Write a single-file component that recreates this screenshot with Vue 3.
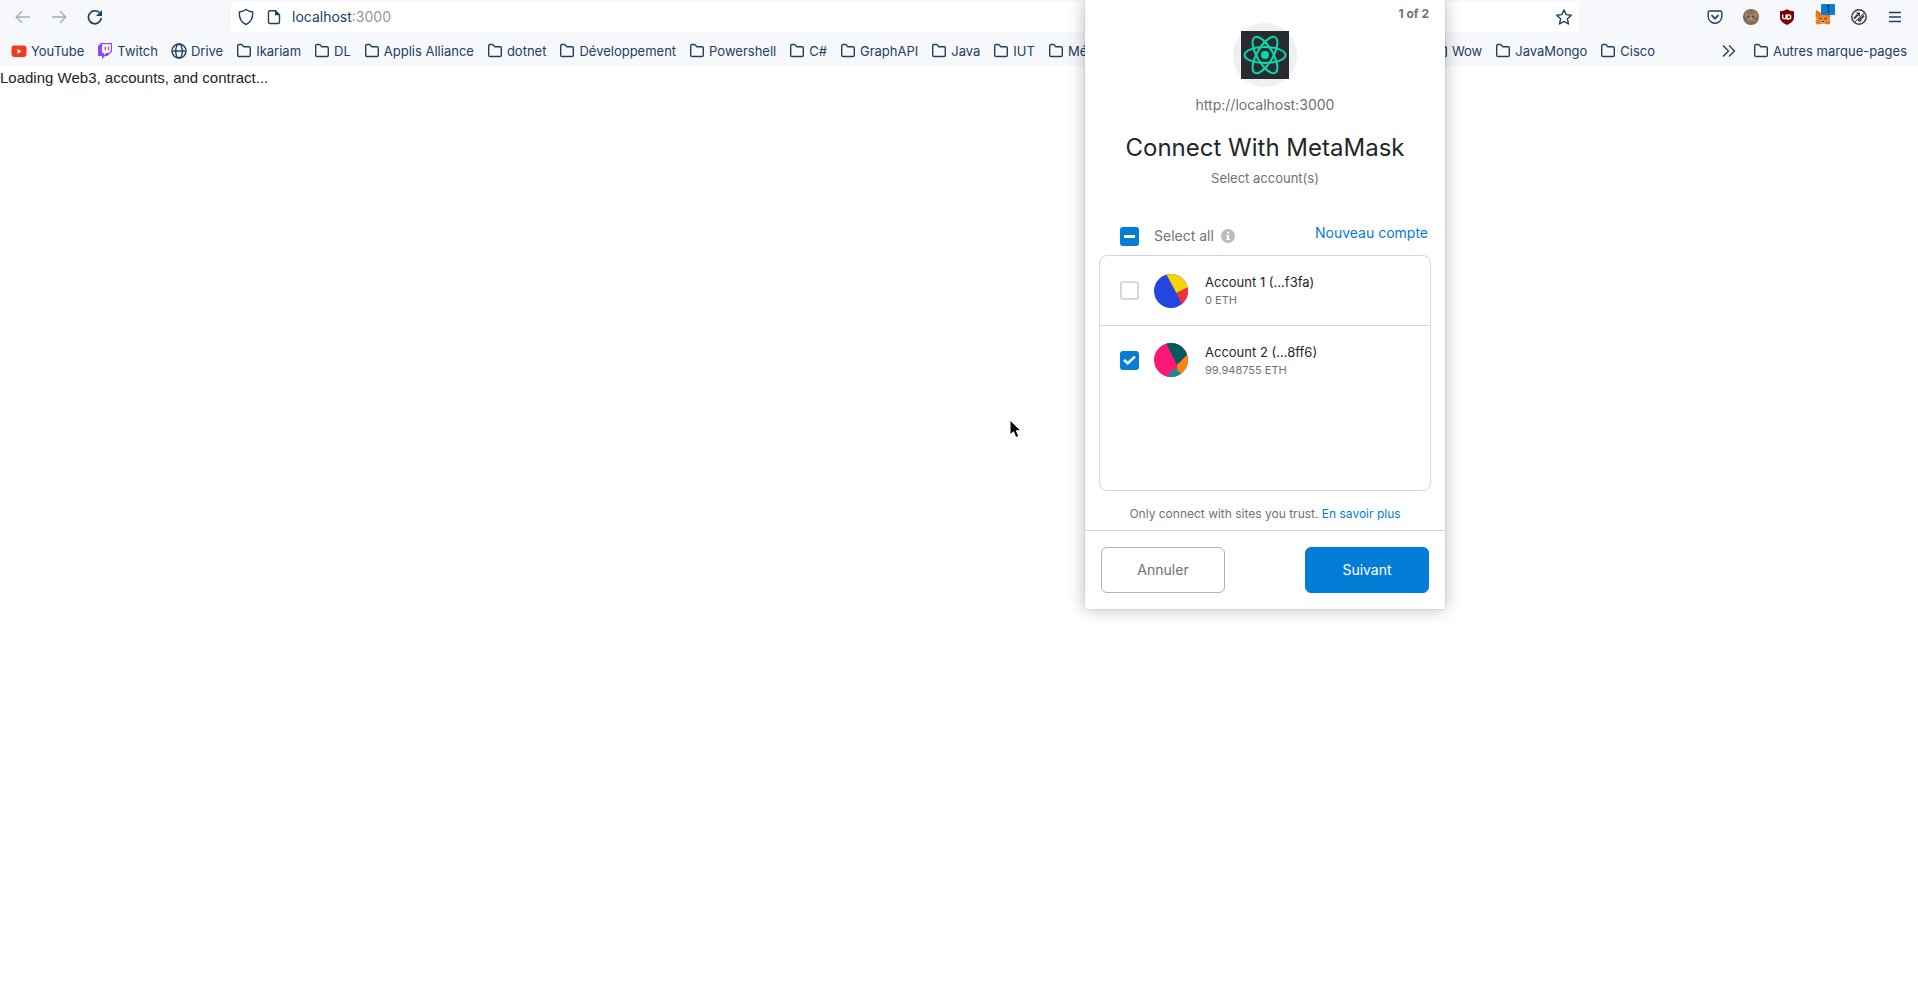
<script setup>
import { ref } from 'vue'

const folders = ['Ikariam', 'DL', 'Applis Alliance', 'dotnet', 'Développement', 'Powershell', 'C#', 'GraphAPI', 'Java', 'IUT']
const lateFolders = ['Wow', 'JavaMongo', 'Cisco']
const host = ref('localhost')
const accounts = ref([
  { id: 'acc1', name: 'Account 1 (...f3fa)', balance: '0 ETH', checked: false },
  { id: 'acc2', name: 'Account 2 (...8ff6)', balance: '99.948755 ETH', checked: true },
])
const folderPath = 'M1.7 3v9.2q0 1.3 1.3 1.3h10q1.3 0 1.3-1.3V5q0-1.3-1.3-1.3H7.8L6.2 1.9q-.4-.4-1-.4H3Q1.7 1.500 1.700 3z'
</script>

<template>
  <div class="browser">
    <header class="chrome">
      <div class="toolbar">
        <button class="tool dim" aria-label="Back">
          <svg width="16" height="16" viewBox="0 0 16 16"><path d="M15 8H1.500M7 2.200 1.200 8 7 13.800" /></svg>
        </button>
        <button class="tool dim" aria-label="Forward">
          <svg width="16" height="16" viewBox="0 0 16 16"><path d="M1 8h13.500M9 2.200 14.800 8 9 13.800" /></svg>
        </button>
        <button class="tool" aria-label="Reload">
          <svg width="16" height="16" viewBox="0 0 16 16"><path d="M14.400 9.200A6.500 6.500 0 1 1 12.400 3.500" stroke-width="1.700" /><path d="M15 1v6H9z" class="solid" /></svg>
        </button>
        <div class="urlbar">
          <svg width="16" height="18" viewBox="0 0 16 18"><path d="M8 1.500c2 1.600 4.200 2.300 6.700 2.500C14.900 10 13 14.500 8 16.500 3 14.500 1.100 10 1.300 4 3.800 3.800 6 3.100 8 1.500z" /></svg>
          <svg class="doc" width="14" height="16" viewBox="0 0 14 16"><path d="M3 1.800h5.500l4 4V13q0 1.500-1.500 1.500H3Q1.500 14.500 1.500 13V3.300Q1.500 1.800 3 1.800z" /><path d="M8 1.500v4.800h5z" class="solid" /></svg>
          <label class="address"><input v-model="host" aria-label="Address"><span>:3000</span></label>
          <button class="star" aria-label="Bookmark this page">
            <svg width="18" height="18" viewBox="0 0 18 18"><path d="m9 1.800 2.100 4.800 5.200.6-3.900 3.600 1.100 5.200L9 13.400 4.500 16l1.100-5.200-3.900-3.600 5.200-.6z" stroke-linejoin="round" /></svg>
          </button>
        </div>
        <button class="tool" aria-label="Pocket">
          <svg width="16" height="16" viewBox="0 0 16 16"><path d="M2.500 2h11q1.300 0 1.300 1.300V7.500a6.800 6.800 0 0 1-13.600 0V3.300Q1.200 2 2.500 2z" /><path d="m4.500 6.200 3.500 3.400 3.500-3.400" stroke-width="1.800" /></svg>
        </button>
        <button class="tool" aria-label="Profile">
          <svg width="16" height="16" viewBox="0 0 16 16">
            <g stroke="none"><circle cx="8" cy="8" r="8" fill="#7d6650" /><path d="M2 4q5-5 11-1l2 5-3 5H5L2 9z" fill="#a08467" /><path d="M4 13.500q4 3 8 0l-2-2H6z" fill="#8b6d50" /><circle cx="5.400" cy="7.500" r="1.100" fill="#3d2f24" /><circle cx="10.300" cy="7.500" r="1.100" fill="#3d2f24" /><path d="m7 9.500.9-.6.900.6-.9.900z" fill="#e0b59b" /></g>
            <path d="M5 2.500 6 5M8 1.500V5M11 2.500 10 5M2 9l3 1M14 9l-3 1" stroke="#584430" stroke-width=".8" />
          </svg>
        </button>
        <button class="tool" aria-label="uBlock Origin">
          <svg width="16" height="16" viewBox="0 0 16 16"><path d="M8 .2Q11 2 15 2.300V8c0 4-3 6-7 8-4-2-7-4-7-8V2.300Q5 2 8 .2z" fill="#800000" stroke="none" /><path d="M3.700 5.500v2.700a1.700 1.700 0 0 0 3.400 0V5.500M7.500 5.900h2.100a2 2 0 1 1 0 4.100H8.200V5.900" stroke="#fff" stroke-width="1.400" /></svg>
        </button>
        <button class="tool fox" aria-label="MetaMask">
          <svg width="16" height="16" viewBox="0 0 16 16"><g stroke="none"><path d="m1 1 5 3h4l5-3 .6 6-1 3 .8 3-1.400 2.500-3.500-.8H5.500l-3.500.8L.6 13l.8-3-1-3z" fill="#f6851b" /><path d="m1 1 5 3-.5 4L1 7zM15 1l-5 3 .5 4L15 7z" fill="#e2761b" /><path d="m.6 13 4.900-.6v2.300L2 15.500zM15.400 13l-4.900-.6v2.300l3.500.8z" fill="#e4761b" /><path d="m5.800 12.500.8-1h2.800l.8 1-.3 2H6.100z" fill="#c0ad9e" /><path d="m3.800 9.500 2.400-.8.500 1.800zM12.200 9.500l-2.400-.8-.5 1.800z" fill="#233447" /><path d="m6.500 13 .5-.7h2l.5.700z" fill="#161616" /></g></svg>
          <span class="badge">1</span>
        </button>
        <button class="tool" aria-label="Extension">
          <svg width="16" height="16" viewBox="0 0 16 16"><g stroke="#3b3e42"><circle cx="8" cy="8" r="7.200" stroke-width="1.500" /><path d="M3.500 13.500 13.500 3.500" stroke-width="1" /><path d="M3 9.500 7 5.500M13 6.500 9 10.500" stroke-width="1.900" /><path d="M4.800 3.500h4.200v4.200zM11.200 12.500H7V8.300z" fill="#3b3e42" stroke="none" /></g></svg>
        </button>
        <button class="tool" aria-label="Menu">
          <svg width="16" height="16" viewBox="0 0 16 16"><path d="M2 3.500h12M2 8h12M2 12.500h12" /></svg>
        </button>
      </div>
      <nav class="bookmarks" aria-label="Bookmarks">
        <a href="#"><svg width="16" height="16" viewBox="0 0 16 16"><rect x=".5" y="2.500" width="15" height="11.500" rx="3" fill="#f03a22" stroke="none" /><path d="m6.500 5.800 4 2.400-4 2.500z" fill="#fff" stroke="none" /></svg>YouTube</a>
        <a href="#"><svg width="16" height="16" viewBox="0 0 16 16"><g stroke="none"><path d="M4 0h11v8.500l-4.500 4.500H8l-3 3v-3H1V3z" fill="#9146ff" /><path d="M5 1.200h8.800v6.600l-2.300 2.200H9L7 12v-2H5z" fill="#fff" /><path d="M7.700 3.500H9v3.700H7.700zM10.800 3.500h1.300v3.700h-1.300z" fill="#9146ff" /></g></svg>Twitch</a>
        <a href="#"><svg width="16" height="16" viewBox="0 0 16 16"><circle cx="8" cy="8" r="7" /><ellipse cx="8" cy="8" rx="3.300" ry="7" /><path d="M1 8h14" /></svg>Drive</a>
        <a v-for="f in folders" :key="f" href="#"><svg width="16" height="16" viewBox="0 0 16 16"><path :d="folderPath" /></svg>{{ f }}</a>
        <a href="#" class="covered"><svg width="16" height="16" viewBox="0 0 16 16"><path :d="folderPath" /></svg>Mé</a>
        <a v-for="f in lateFolders" :key="f" href="#"><svg width="16" height="16" viewBox="0 0 16 16"><path :d="folderPath" /></svg>{{ f }}</a>
        <button class="more" aria-label="More bookmarks">
          <svg width="16" height="16" viewBox="0 0 16 16"><path d="M2 2.500 7.500 8 2 13.500M8 2.500 13.500 8 8 13.500" /></svg>
        </button>
        <a href="#"><svg width="16" height="16" viewBox="0 0 16 16"><path :d="folderPath" /></svg>Autres marque-pages</a>
      </nav>
    </header>

    <main class="page">Loading Web3, accounts, and contract...</main>

    <section class="popup" role="dialog" aria-labelledby="title">
      <div class="step">1 of 2</div>
      <div class="site-icon">
        <svg width="48" height="48" viewBox="0 0 48 48">
          <rect width="48" height="48" fill="#282c31" />
          <g fill="none" stroke="#0ad8af" stroke-width="2">
            <ellipse cx="24" cy="24" rx="20.500" ry="8" />
            <ellipse cx="24" cy="24" rx="20.500" ry="8" transform="rotate(60 24 24)" />
            <ellipse cx="24" cy="24" rx="20.500" ry="8" transform="rotate(120 24 24)" />
          </g>
          <circle cx="24" cy="24" r="4" fill="#0ad8af" />
        </svg>
      </div>
      <div class="origin">http://localhost:3000</div>
      <h1 id="title">Connect With MetaMask</h1>
      <p class="subtitle">Select account(s)</p>

      <div class="list-head">
        <input id="all" type="checkbox" class="check" :indeterminate="true">
        <label for="all">Select all</label>
        <svg class="info" width="14" height="14" viewBox="0 0 14 14"><circle cx="7" cy="7" r="7" fill="#b7bcc2" /><path d="M6 2.800h2v1.900H6zM5.200 5.900H8v3.600h.9V11H5.200V9.500H6V7.300h-.8z" fill="#fff" /></svg>
        <a href="#" class="new">Nouveau compte</a>
      </div>

      <div class="accounts">
        <div v-for="(a, i) in accounts" :key="a.id" class="account">
          <input :id="a.id" v-model="a.checked" type="checkbox" class="check">
          <svg v-if="i === 0" class="avatar" width="34" height="34" viewBox="0 0 34 34"><rect width="34" height="34" fill="#2446e0" /><path d="M11-2 22.500 19 40 11V-2z" fill="#f6d403" /><path d="M22.500 19 29 33h9V11z" fill="#f72e3d" /></svg>
          <svg v-else class="avatar" width="34" height="34" viewBox="0 0 34 34"><rect width="34" height="34" fill="#fb1977" /><path d="M11-2 23 22 38 7V-2z" fill="#035b5f" /><path d="m23 22 12-12v24h-5l-7-6z" fill="#f88512" /><path d="m12 34 9-9 10 9z" fill="#1a8d83" /></svg>
          <label :for="a.id"><span class="name">{{ a.name }}</span><span class="balance">{{ a.balance }}</span></label>
        </div>
      </div>

      <p class="trust">Only connect with sites you trust. <a href="#">En savoir plus</a></p>
      <footer class="actions">
        <button class="btn">Annuler</button>
        <button class="btn primary">Suivant</button>
      </footer>
    </section>

    <svg class="cursor" width="14" height="22" viewBox="0 0 14 22"><path d="M1 1v15l3.500-3.200 2.300 5.700 3-1.200-2.400-5.500H12z" fill="#0c0c0c" stroke="#fff" stroke-linejoin="round" /></svg>
  </div>
</template>

<style>
body { background: #fff; }
</style>

<style scoped>
.browser { position: relative; min-height: 100vh; overflow: hidden; font-family: Inter, sans-serif; }
button { border: 0; padding: 0; background: none; font: inherit; color: inherit; }
a { text-decoration: none; color: inherit; }
svg { flex: none; display: block; }
.chrome { background: #f7f8fc; color: #20405f; }
.chrome svg { fill: none; stroke: #20405f; stroke-width: 1.4; }
.chrome .solid { fill: #20405f; stroke: none; }
.toolbar { display: flex; align-items: center; height: 34px; padding: 0 5px; }
.tool { position: relative; width: 36px; height: 34px; display: grid; place-items: center; flex: none; }
.tool.dim svg { stroke: #a3afbf; }
.urlbar { flex: 1; min-width: 0; display: flex; align-items: center; height: 30px; margin: 0 118px; padding: 0 6px 0 7px; background: #fff; border-radius: 3px; }
.doc { margin: 0 11px 0 13px; }
.address { display: flex; flex: 1; font-size: 14px; line-height: 20px; color: #20405f; }
.address input { field-sizing: content; border: 0; padding: 0; outline: 0; background: none; font: inherit; color: inherit; }
.address span { color: #8b9bb0; }
.badge { position: absolute; left: 16px; top: 4px; width: 14px; height: 11px; background: #0b7cd6; color: #101820; font-size: 10px; line-height: 11px; text-align: center; border-radius: 1px; }
.bookmarks { display: flex; align-items: center; height: 31px; padding: 1px 4px 0 5px; font-size: 13px; white-space: nowrap; }
.bookmarks a { display: flex; align-items: center; gap: 4px; padding: 0 7px 0 6px; flex: none; }
.bookmarks .covered { flex: 0 0 371px; }
.more { margin-left: auto; margin-right: 10px; }
.page { font: 15px/20px "Liberation Sans", Arial, sans-serif; color: #212529; padding-top: 2px; }

.popup { position: absolute; top: 0; left: 1085px; width: 360px; background: #fff; box-shadow: 0 0 16px rgba(0, 0, 0, .28), 0 0 1px rgba(0, 0, 0, .3); color: #24272a; font-size: 14px; line-height: 20px; text-align: center; }
.step { height: 23px; padding: 5px 16px 0; box-sizing: border-box; text-align: right; font-size: 12px; line-height: 18px; font-weight: 700; color: #6a737d; }
.site-icon { width: 64px; height: 64px; margin: 0 auto; border-radius: 50%; background: #edeff1; display: grid; place-items: center; }
.origin { margin-top: 8px; color: #6a737d; }
h1 { margin: 16px 0 0; font-size: 24px; line-height: 34px; font-weight: 400; }
.subtitle { margin: 3px 0 0; font-size: 13px; color: #6a737d; }
.list-head { display: flex; align-items: center; height: 20px; margin-top: 38px; padding: 0 17px 0 35px; color: #6a737d; }
.list-head label { margin-left: 15px; }
.info { margin-left: 7px; }
.new { margin-left: auto; color: #037dd6; padding-bottom: 6px; }
.check { appearance: none; box-sizing: border-box; position: relative; flex: none; width: 19px; height: 19px; margin: 0; border: 2px solid #d5d8db; border-radius: 3px; background: #fff; }
.check:checked, .check:indeterminate { border-color: #037dd6; background: #037dd6; }
.check:indeterminate::after { content: ""; position: absolute; left: 2px; top: 6px; width: 11px; height: 3px; background: #fff; }
.check:checked::after { content: ""; position: absolute; left: 1px; top: 3px; width: 13px; height: 10px; background: #fff; clip-path: polygon(0 52%, 14% 36%, 37% 60%, 85% 2%, 100% 18%, 37% 96%); }
.accounts { box-sizing: border-box; margin: 9px 14px 0; height: 236px; border: 1px solid #d2d8dd; border-radius: 8px; text-align: left; }
.account { box-sizing: border-box; display: flex; align-items: center; height: 69px; padding-left: 20px; }
.account + .account { border-top: 1px solid #d2d8dd; }
.avatar { margin-left: 15px; border-radius: 50%; }
.account label { margin-left: 17px; }
.name, .balance { display: block; }
.name { font-size: 13px; }
.balance { font-size: 11px; line-height: 17px; color: #6a737d; }
.trust { margin: 14px 0 7px; font-size: 12px; line-height: 18px; color: #6a737d; }
.trust a { color: #037dd6; }
.actions { display: flex; justify-content: space-between; padding: 16px; border-top: 1px solid #d2d8dd; }
.btn { width: 124px; height: 46px; border: 1px solid #b0b4b9; border-radius: 6px; color: #6a737d; }
.primary { border-color: #037dd6; background: #037dd6; color: #fff; }
.cursor { position: absolute; left: 1009px; top: 419px; }
</style>
